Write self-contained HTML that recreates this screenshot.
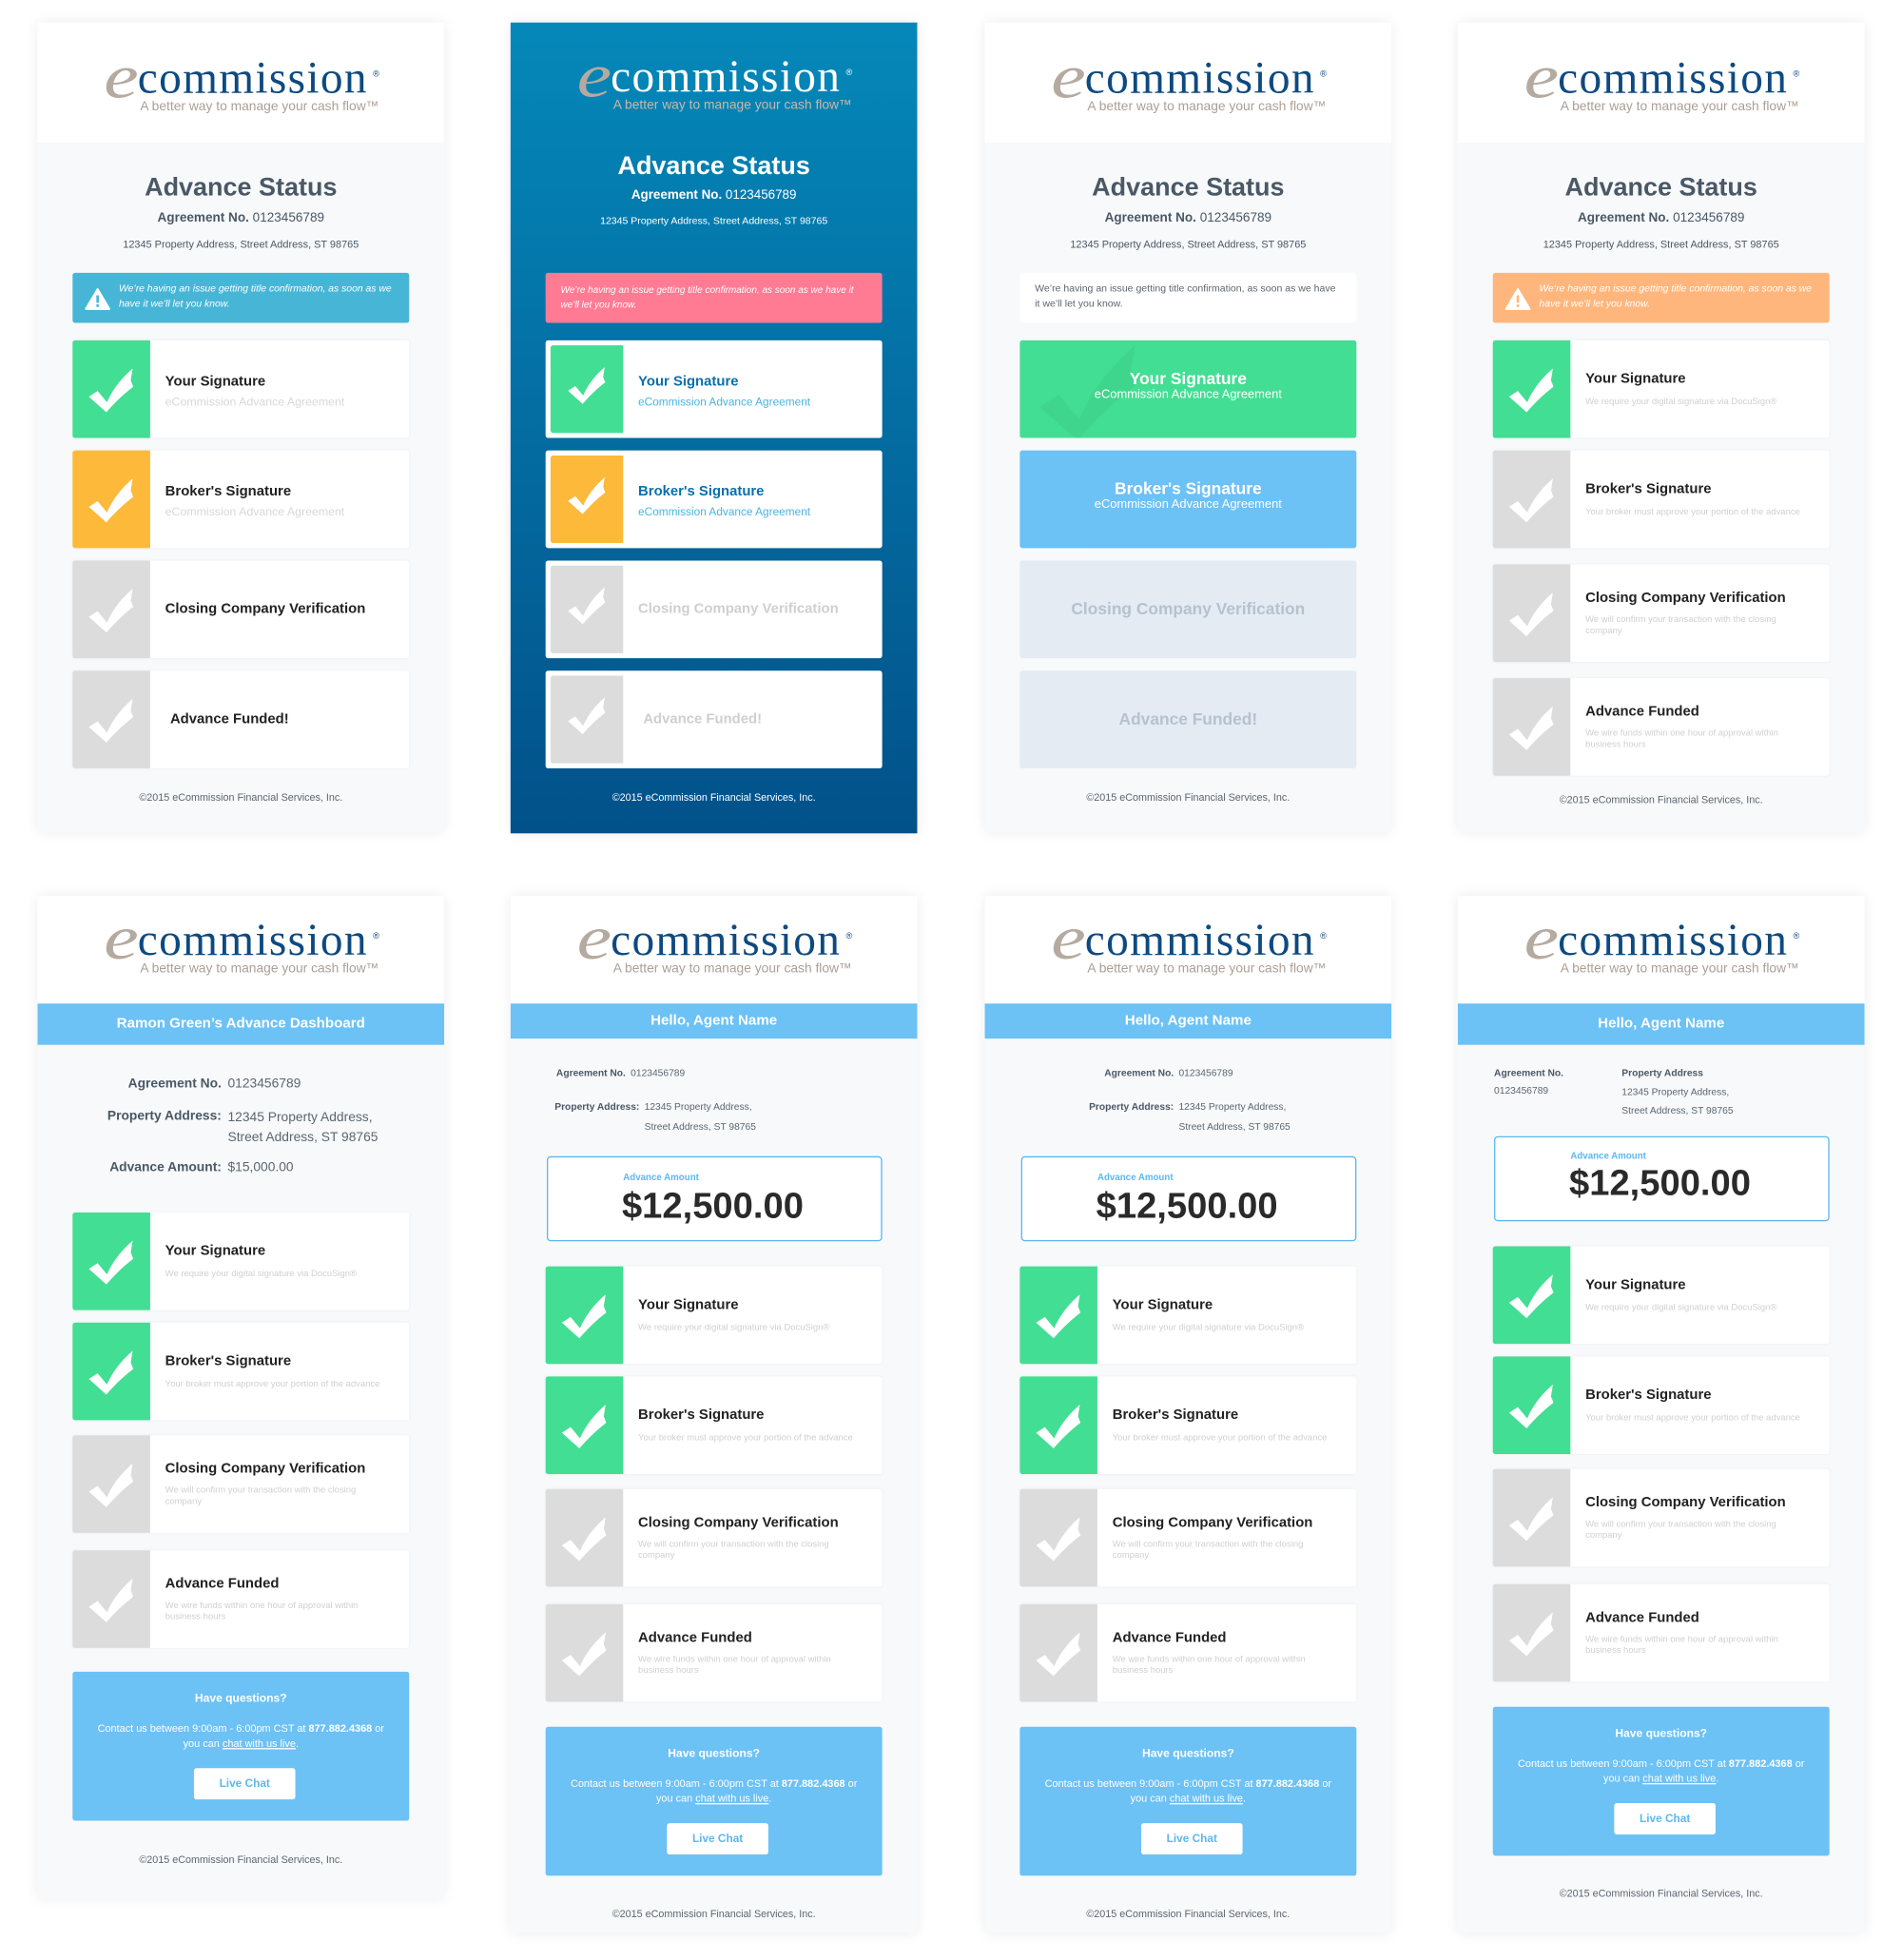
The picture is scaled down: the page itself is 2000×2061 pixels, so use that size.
<!DOCTYPE html>
<html><head><meta charset="utf-8"><style>
*{margin:0;padding:0;box-sizing:border-box}
html,body{width:2000px;height:2060px;background:#fff;overflow:hidden}
body{font-family:"Liberation Sans",sans-serif}
#w{position:absolute;left:0;top:0;width:1520px;height:1566px;transform:scale(1.31579);transform-origin:0 0}
.card{position:absolute;width:325px;background:#f7f9fb;box-shadow:0 0 10px rgba(0,0,0,.08);overflow:hidden}
.hdr{position:absolute;left:0;top:0;width:325px;background:#fff}
.le{position:absolute;left:53px;font:italic 50px/50px "Liberation Serif",serif;color:#b5aaa0;transform:scaleX(1.25);transform-origin:0 0}
.lc{position:absolute;left:80px;font:36px/36px "Liberation Serif",serif;color:#0e4a80;letter-spacing:1px}
.lr{position:absolute;left:268px;font:7px/7px "Liberation Sans",sans-serif;color:#0e4a80}
.lt{position:absolute;left:82px;font:10.5px/10px "Liberation Sans",sans-serif;color:#ab9f95;white-space:nowrap}
.t{position:absolute;left:0;right:0;text-align:center;white-space:nowrap;color:#4a5866}
.h1{font-weight:bold;font-size:20.5px;line-height:24px}
.ag{font-size:10.3px;line-height:12px}
.ad{font-size:8.3px;line-height:10px}
.ft{font-size:8.2px;line-height:10px;color:#5c6670}
.al{position:absolute;left:28px;width:269px;height:40px;border-radius:2px;color:#fff;font:italic 7.9px/12px "Liberation Sans",sans-serif}
.al .tx{position:absolute;left:37px;top:7px;width:220px}
.tri{position:absolute;left:10px;top:12px}
.it{position:absolute;left:28px;width:269px;height:78px;background:#fff;border-radius:2px;box-shadow:0 0 2px rgba(0,0,0,.05)}
.ic{position:absolute;left:0;top:0;width:62px;height:78px;border-radius:2px 0 0 2px}
.g{background:#42de93}.o{background:#fdb93a}.gr{background:#dcdcdc}
.tt{position:absolute;left:74px;top:26px;font-weight:bold;font-size:11.3px;line-height:14px;color:#222;white-space:nowrap}
.tc{top:32px}
.st{position:absolute;left:74px;top:44px;font-size:9.4px;line-height:10px;color:#d8d8d8;white-space:nowrap}
.s2{position:absolute;left:74px;top:44px;width:168px;font-size:7.2px;line-height:9px;color:#d0d0d0}
.bar{position:absolute;left:0;width:325px;background:#6cc1f5;color:#fff;font-weight:bold;font-size:11.5px;text-align:center}
.lb{position:absolute;font-weight:bold;color:#4a5866;white-space:nowrap}
.vl{position:absolute;color:#5c6670;white-space:nowrap}
.amt{position:absolute;left:29px;width:268px;height:68px;border:1.5px solid #5bb8ee;border-radius:3px;background:#fff}
.amt .a1{position:absolute;left:60px;top:11px;font-size:7.4px;font-weight:bold;color:#5bb8ee}
.amt .a2{position:absolute;left:59px;top:22px;font-size:29px;line-height:34px;font-weight:bold;color:#2a2a2a}
.help{position:absolute;left:28px;width:269px;height:119px;background:#6cc1f5;border-radius:2px;color:#fff;text-align:center}
.help .q{position:absolute;left:0;right:0;top:15px;font-weight:bold;font-size:9.2px;line-height:12px}
.help .c{position:absolute;left:0;right:0;top:39px;font-size:8.3px;line-height:12px;white-space:nowrap}
.help .c u{text-decoration:underline}
.help .b{position:absolute;left:97px;top:77px;width:81px;height:25px;background:#fff;border-radius:2px;color:#5bb8ee;font-size:9px;line-height:25px;font-weight:bold}
.bl{position:absolute;left:28px;width:269px;height:78px;border-radius:2px;text-align:center}
.bl .x1{position:relative;padding-top:23px;color:#fff;font-weight:bold;font-size:13.2px;line-height:15px}
.bl .x2{position:relative;color:#fff;font-size:9.8px;line-height:12px}
</style></head><body>
<svg width="0" height="0" style="position:absolute"><defs>
<symbol id="ck" viewBox="0 0 62 78"><path d="M13 45 L20 40.5 L27.5 49.5 C32.5 38 40 29.5 48 22.5 L46.5 32 L48.5 37 C40 43.5 33 50.5 27 57.5 Z" fill="#fff"/></symbol>
<symbol id="tr" viewBox="0 0 20 18"><path d="M10 1 L19.5 17 L0.5 17 Z" fill="#fff" stroke="#fff" stroke-linejoin="round" stroke-width="1.5"/><rect x="9" y="6" width="2" height="6" fill="currentColor"/><rect x="9" y="13.3" width="2" height="2" fill="currentColor"/></symbol>
</defs></svg>
<div id="w">

<!-- ROW 1 CARD 1 -->
<div class="card" style="left:30px;top:18px;height:647px">
 <div class="hdr" style="height:96px"></div>
 <div class="le" style="top:18px">e</div><div class="lc" style="top:26px">commission</div><div class="lr" style="top:38px">®</div><div class="lt" style="top:62px">A better way to manage your cash flow™</div>
 <div class="t h1" style="top:120px">Advance Status</div>
 <div class="t ag" style="top:151px"><b>Agreement No.</b> 0123456789</div>
 <div class="t ad" style="top:172px">12345 Property Address, Street Address, ST 98765</div>
 <div class="al" style="top:200px;background:#47b6d6;color:#47b6d6"><svg class="tri" width="20" height="18"><use href="#tr"/></svg><div class="tx" style="color:#fff">We’re having an issue getting title confirmation, as soon as we have it we’ll let you know.</div></div>
 <div class="it" style="top:254px"><div class="ic g"><svg width="62" height="78"><use href="#ck"/></svg></div><div class="tt">Your Signature</div><div class="st">eCommission Advance Agreement</div></div>
 <div class="it" style="top:342px"><div class="ic o"><svg width="62" height="78"><use href="#ck"/></svg></div><div class="tt">Broker's Signature</div><div class="st">eCommission Advance Agreement</div></div>
 <div class="it" style="top:430px"><div class="ic gr"><svg width="62" height="78"><use href="#ck"/></svg></div><div class="tt tc">Closing Company Verification</div></div>
 <div class="it" style="top:518px"><div class="ic gr"><svg width="62" height="78"><use href="#ck"/></svg></div><div class="tt tc" style="left:78px">Advance Funded!</div></div>
 <div class="t ft" style="top:615px">©2015 eCommission Financial Services, Inc.</div>
</div>

<!-- ROW 1 CARD 2 (blue) -->
<div class="card" style="left:408px;top:18px;height:648px;background:linear-gradient(#0588b9,#02518a)">
 <div class="le" style="top:17px">e</div><div class="lc" style="top:25px;color:#fff">commission</div><div class="lr" style="top:37px;color:#fff">®</div><div class="lt" style="top:61px;color:#c9b9aa">A better way to manage your cash flow™</div>
 <div class="t h1" style="top:103px;color:#fff">Advance Status</div>
 <div class="t ag" style="top:133px;color:#fff;font-size:10.2px"><b>Agreement No.</b> 0123456789</div>
 <div class="t ad" style="top:154px;color:#fff;font-size:8px">12345 Property Address, Street Address, ST 98765</div>
 <div class="al" style="top:200px;background:#ff7a93"><div class="tx" style="left:12px;top:8px;width:240px;font-size:7.6px;line-height:12px">We’re having an issue getting title confirmation, as soon as we have it we’ll let you know.</div></div>
 <div class="it" style="top:254px"><div class="ic g" style="left:4px;top:4px;width:58px;height:70px"><svg width="58" height="70" viewBox="0 4 62 70"><use href="#ck"/></svg></div><div class="tt" style="color:#0b6fab">Your Signature</div><div class="st" style="color:#48b4e2;font-size:9px">eCommission Advance Agreement</div></div>
 <div class="it" style="top:342px"><div class="ic o" style="left:4px;top:4px;width:58px;height:70px"><svg width="58" height="70" viewBox="0 4 62 70"><use href="#ck"/></svg></div><div class="tt" style="color:#0b6fab">Broker's Signature</div><div class="st" style="color:#48b4e2;font-size:9px">eCommission Advance Agreement</div></div>
 <div class="it" style="top:430px"><div class="ic gr" style="left:4px;top:4px;width:58px;height:70px"><svg width="58" height="70" viewBox="0 4 62 70"><use href="#ck"/></svg></div><div class="tt tc" style="color:#cfcfcf">Closing Company Verification</div></div>
 <div class="it" style="top:518px"><div class="ic gr" style="left:4px;top:4px;width:58px;height:70px"><svg width="58" height="70" viewBox="0 4 62 70"><use href="#ck"/></svg></div><div class="tt tc" style="left:78px;color:#cfcfcf">Advance Funded!</div></div>
 <div class="t ft" style="top:615px;color:#fff">©2015 eCommission Financial Services, Inc.</div>
</div>

<!-- ROW 1 CARD 3 -->
<div class="card" style="left:787px;top:18px;height:647px">
 <div class="hdr" style="height:96px"></div>
 <div class="le" style="top:18px">e</div><div class="lc" style="top:26px">commission</div><div class="lr" style="top:38px">®</div><div class="lt" style="top:62px">A better way to manage your cash flow™</div>
 <div class="t h1" style="top:120px">Advance Status</div>
 <div class="t ag" style="top:151px"><b>Agreement No.</b> 0123456789</div>
 <div class="t ad" style="top:172px">12345 Property Address, Street Address, ST 98765</div>
 <div class="al" style="top:200px;background:#fff;color:#5c6670;font-style:normal"><div class="tx" style="left:12px;top:7px;width:245px;font-size:8px">We’re having an issue getting title confirmation, as soon as we have it we’ll let you know.</div></div>
 <div class="bl" style="top:254px;background:#42de93;overflow:hidden"><svg style="position:absolute;left:-40px;top:-45px" width="190" height="170" viewBox="0 0 62 78"><path d="M13 45 L20 40.5 L27.5 49.5 C32.5 38 40 29.5 48 22.5 L46.5 32 L48.5 37 C40 43.5 33 50.5 27 57.5 Z" fill="#000" opacity=".04"/></svg>
  <div class="x1">Your Signature</div><div class="x2">eCommission Advance Agreement</div></div>
 <div class="bl" style="top:342px;background:#6cc1f5"><div class="x1">Broker's Signature</div><div class="x2">eCommission Advance Agreement</div></div>
 <div class="bl" style="top:430px;background:#e4ebf3"><div class="x1" style="padding-top:31px;color:#b5c2cf">Closing Company Verification</div></div>
 <div class="bl" style="top:518px;background:#e4ebf3"><div class="x1" style="padding-top:31px;color:#b5c2cf">Advance Funded!</div></div>
 <div class="t ft" style="top:615px">©2015 eCommission Financial Services, Inc.</div>
</div>

<!-- ROW 1 CARD 4 -->
<div class="card" style="left:1165px;top:18px;height:647px">
 <div class="hdr" style="height:96px"></div>
 <div class="le" style="top:18px">e</div><div class="lc" style="top:26px">commission</div><div class="lr" style="top:38px">®</div><div class="lt" style="top:62px">A better way to manage your cash flow™</div>
 <div class="t h1" style="top:120px">Advance Status</div>
 <div class="t ag" style="top:151px"><b>Agreement No.</b> 0123456789</div>
 <div class="t ad" style="top:172px">12345 Property Address, Street Address, ST 98765</div>
 <div class="al" style="top:200px;background:#ffb67c;color:#ffb67c"><svg class="tri" width="20" height="18"><use href="#tr"/></svg><div class="tx" style="color:#fff">We’re having an issue getting title confirmation, as soon as we have it we’ll let you know.</div></div>
 <div class="it" style="top:254px"><div class="ic g"><svg width="62" height="78"><use href="#ck"/></svg></div><div class="tt" style="top:24px">Your Signature</div><div class="s2" style="top:44px">We require your digital signature via DocuSign®</div></div>
 <div class="it" style="top:342px"><div class="ic gr"><svg width="62" height="78"><use href="#ck"/></svg></div><div class="tt" style="top:24px">Broker's Signature</div><div class="s2" style="top:44px;width:200px">Your broker must approve your portion of the advance</div></div>
 <div class="it" style="top:433px"><div class="ic gr"><svg width="62" height="78"><use href="#ck"/></svg></div><div class="tt" style="top:20px">Closing Company Verification</div><div class="s2" style="top:39px">We will confirm your transaction with the closing company</div></div>
 <div class="it" style="top:524px"><div class="ic gr"><svg width="62" height="78"><use href="#ck"/></svg></div><div class="tt" style="top:20px">Advance Funded</div><div class="s2" style="top:39px">We wire funds within one hour of approval within business hours</div></div>
 <div class="t ft" style="top:617px">©2015 eCommission Financial Services, Inc.</div>
</div>

<!-- ROW 2 CARD 1 -->
<div class="card" style="left:30px;top:716px;height:801px">
 <div class="hdr" style="height:86px"></div>
 <div class="le" style="top:8px">e</div><div class="lc" style="top:17px">commission</div><div class="lr" style="top:29px">®</div><div class="lt" style="top:53px">A better way to manage your cash flow™</div>
 <div class="bar" style="top:86px;height:33px;line-height:33px">Ramon Green’s Advance Dashboard</div>
 <div class="lb" style="right:178px;top:144px;font-size:10.5px">Agreement No.</div><div class="vl" style="left:152px;top:144px;font-size:10.5px">0123456789</div>
 <div class="lb" style="right:178px;top:170px;font-size:10.5px">Property Address:</div><div class="vl" style="left:152px;top:169px;font-size:10.5px;line-height:16px">12345 Property Address,<br>Street Address, ST 98765</div>
 <div class="lb" style="right:178px;top:211px;font-size:10.5px">Advance Amount:</div><div class="vl" style="left:152px;top:211px;font-size:10.5px">$15,000.00</div>
 <div class="it" style="top:253px"><div class="ic g"><svg width="62" height="78"><use href="#ck"/></svg></div><div class="tt" style="top:24px">Your Signature</div><div class="s2">We require your digital signature via DocuSign®</div></div>
 <div class="it" style="top:341px"><div class="ic g"><svg width="62" height="78"><use href="#ck"/></svg></div><div class="tt" style="top:24px">Broker's Signature</div><div class="s2" style="width:200px">Your broker must approve your portion of the advance</div></div>
 <div class="it" style="top:431px"><div class="ic gr"><svg width="62" height="78"><use href="#ck"/></svg></div><div class="tt" style="top:20px">Closing Company Verification</div><div class="s2" style="top:39px">We will confirm your transaction with the closing company</div></div>
 <div class="it" style="top:523px"><div class="ic gr"><svg width="62" height="78"><use href="#ck"/></svg></div><div class="tt" style="top:20px">Advance Funded</div><div class="s2" style="top:39px">We wire funds within one hour of approval within business hours</div></div>
 <div class="help" style="top:620px"><div class="q">Have questions?</div><div class="c">Contact us between 9:00am - 6:00pm CST at <b>877.882.4368</b> or<br>you can <u>chat with us live</u>.</div><div class="b">Live Chat</div></div>
 <div class="t ft" style="top:766px">©2015 eCommission Financial Services, Inc.</div>
</div>

<!-- ROW 2 CARD 2 -->
<div class="card" style="left:408px;top:716px;height:829px">
 <div class="hdr" style="height:86px"></div>
 <div class="le" style="top:8px">e</div><div class="lc" style="top:17px">commission</div><div class="lr" style="top:29px">®</div><div class="lt" style="top:53px">A better way to manage your cash flow™</div>
 <div class="bar" style="top:86px;height:28px;line-height:28px">Hello, Agent Name</div>
 <div class="lb" style="right:233px;top:137px;font-size:7.8px">Agreement No.</div><div class="vl" style="left:96px;top:137px;font-size:7.8px">0123456789</div>
 <div class="lb" style="right:222px;top:164px;font-size:7.8px">Property Address:</div><div class="vl" style="left:107px;top:161px;font-size:7.8px;line-height:16px">12345 Property Address,<br>Street Address, ST 98765</div>
 <div class="amt" style="top:208px"><div class="a1">Advance Amount</div><div class="a2">$12,500.00</div></div>
 <div class="it" style="top:296px"><div class="ic g"><svg width="62" height="78"><use href="#ck"/></svg></div><div class="tt" style="top:24px">Your Signature</div><div class="s2">We require your digital signature via DocuSign®</div></div>
 <div class="it" style="top:384px"><div class="ic g"><svg width="62" height="78"><use href="#ck"/></svg></div><div class="tt" style="top:24px">Broker's Signature</div><div class="s2" style="width:200px">Your broker must approve your portion of the advance</div></div>
 <div class="it" style="top:474px"><div class="ic gr"><svg width="62" height="78"><use href="#ck"/></svg></div><div class="tt" style="top:20px">Closing Company Verification</div><div class="s2" style="top:39px">We will confirm your transaction with the closing company</div></div>
 <div class="it" style="top:566px"><div class="ic gr"><svg width="62" height="78"><use href="#ck"/></svg></div><div class="tt" style="top:20px">Advance Funded</div><div class="s2" style="top:39px">We wire funds within one hour of approval within business hours</div></div>
 <div class="help" style="top:664px"><div class="q">Have questions?</div><div class="c">Contact us between 9:00am - 6:00pm CST at <b>877.882.4368</b> or<br>you can <u>chat with us live</u>.</div><div class="b">Live Chat</div></div>
 <div class="t ft" style="top:809px">©2015 eCommission Financial Services, Inc.</div>
</div>

<!-- ROW 2 CARD 3 -->
<div class="card" style="left:787px;top:716px;height:829px">
 <div class="hdr" style="height:86px"></div>
 <div class="le" style="top:8px">e</div><div class="lc" style="top:17px">commission</div><div class="lr" style="top:29px">®</div><div class="lt" style="top:53px">A better way to manage your cash flow™</div>
 <div class="bar" style="top:86px;height:28px;line-height:28px">Hello, Agent Name</div>
 <div class="lb" style="right:174px;top:137px;font-size:7.8px">Agreement No.</div><div class="vl" style="left:155px;top:137px;font-size:7.8px">0123456789</div>
 <div class="lb" style="right:174px;top:164px;font-size:7.8px">Property Address:</div><div class="vl" style="left:155px;top:161px;font-size:7.8px;line-height:16px">12345 Property Address,<br>Street Address, ST 98765</div>
 <div class="amt" style="top:208px"><div class="a1">Advance Amount</div><div class="a2">$12,500.00</div></div>
 <div class="it" style="top:296px"><div class="ic g"><svg width="62" height="78"><use href="#ck"/></svg></div><div class="tt" style="top:24px">Your Signature</div><div class="s2">We require your digital signature via DocuSign®</div></div>
 <div class="it" style="top:384px"><div class="ic g"><svg width="62" height="78"><use href="#ck"/></svg></div><div class="tt" style="top:24px">Broker's Signature</div><div class="s2" style="width:200px">Your broker must approve your portion of the advance</div></div>
 <div class="it" style="top:474px"><div class="ic gr"><svg width="62" height="78"><use href="#ck"/></svg></div><div class="tt" style="top:20px">Closing Company Verification</div><div class="s2" style="top:39px">We will confirm your transaction with the closing company</div></div>
 <div class="it" style="top:566px"><div class="ic gr"><svg width="62" height="78"><use href="#ck"/></svg></div><div class="tt" style="top:20px">Advance Funded</div><div class="s2" style="top:39px">We wire funds within one hour of approval within business hours</div></div>
 <div class="help" style="top:664px"><div class="q">Have questions?</div><div class="c">Contact us between 9:00am - 6:00pm CST at <b>877.882.4368</b> or<br>you can <u>chat with us live</u>.</div><div class="b">Live Chat</div></div>
 <div class="t ft" style="top:809px">©2015 eCommission Financial Services, Inc.</div>
</div>

<!-- ROW 2 CARD 4 -->
<div class="card" style="left:1165px;top:716px;height:829px">
 <div class="hdr" style="height:86px"></div>
 <div class="le" style="top:8px">e</div><div class="lc" style="top:17px">commission</div><div class="lr" style="top:29px">®</div><div class="lt" style="top:53px">A better way to manage your cash flow™</div>
 <div class="bar" style="top:86px;height:33px;line-height:33px">Hello, Agent Name</div>
 <div class="lb" style="left:29px;top:137px;font-size:7.8px">Agreement No.</div><div class="vl" style="left:29px;top:151px;font-size:7.8px">0123456789</div>
 <div class="lb" style="left:131px;top:137px;font-size:7.8px">Property Address</div><div class="vl" style="left:131px;top:149px;font-size:7.8px;line-height:15px">12345 Property Address,<br>Street Address, ST 98765</div>
 <div class="amt" style="top:192px"><div class="a1" style="top:10px">Advance Amount</div><div class="a2" style="top:20px">$12,500.00</div></div>
 <div class="it" style="top:280px"><div class="ic g"><svg width="62" height="78"><use href="#ck"/></svg></div><div class="tt" style="top:24px">Your Signature</div><div class="s2">We require your digital signature via DocuSign®</div></div>
 <div class="it" style="top:368px"><div class="ic g"><svg width="62" height="78"><use href="#ck"/></svg></div><div class="tt" style="top:24px">Broker's Signature</div><div class="s2" style="width:200px">Your broker must approve your portion of the advance</div></div>
 <div class="it" style="top:458px"><div class="ic gr"><svg width="62" height="78"><use href="#ck"/></svg></div><div class="tt" style="top:20px">Closing Company Verification</div><div class="s2" style="top:39px">We will confirm your transaction with the closing company</div></div>
 <div class="it" style="top:550px"><div class="ic gr"><svg width="62" height="78"><use href="#ck"/></svg></div><div class="tt" style="top:20px">Advance Funded</div><div class="s2" style="top:39px">We wire funds within one hour of approval within business hours</div></div>
 <div class="help" style="top:648px"><div class="q">Have questions?</div><div class="c">Contact us between 9:00am - 6:00pm CST at <b>877.882.4368</b> or<br>you can <u>chat with us live</u>.</div><div class="b">Live Chat</div></div>
 <div class="t ft" style="top:793px">©2015 eCommission Financial Services, Inc.</div>
</div>

</div>
</body></html>
